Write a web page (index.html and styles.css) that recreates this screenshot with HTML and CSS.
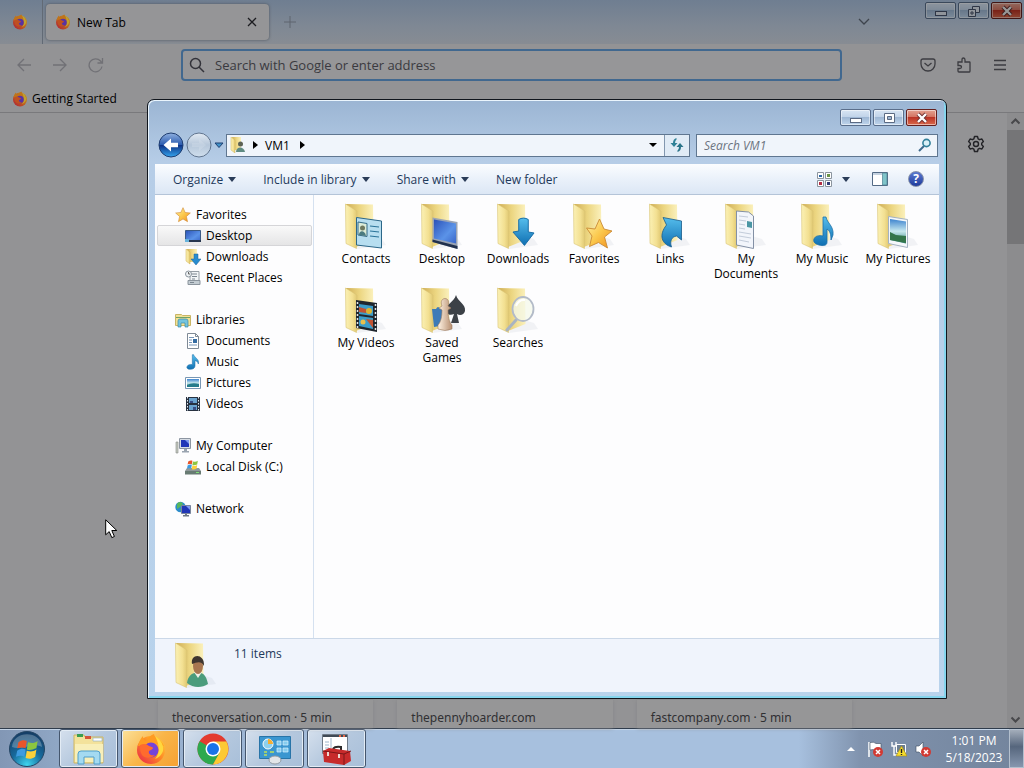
FILE: index.html
```html
<!DOCTYPE html>
<html lang="en">
<head>
    <meta charset="UTF-8">
    <meta name="viewport" content="width=device-width, initial-scale=1.0">
    <title>VM1</title>
    <link rel="stylesheet" href="styles.css">
</head>
<body>
    <!-- Shared icons -->
    <svg class="icon-defs" width="0" height="0" aria-hidden="true">
        <defs>
            <linearGradient id="gFlap" x1="0" y1="0" x2="1" y2="0"><stop offset="0" stop-color="#fbf1b5"/><stop offset=".6" stop-color="#f3e092"/><stop offset="1" stop-color="#e0c872"/></linearGradient>
            <linearGradient id="gBack" x1="0" y1="0" x2="1" y2="0"><stop offset="0" stop-color="#cfae57"/><stop offset=".5" stop-color="#ecd681"/><stop offset="1" stop-color="#fbf1bd"/></linearGradient>
            <linearGradient id="gBlue" x1="0" y1="0" x2="1" y2="1"><stop offset="0" stop-color="#2b52b8"/><stop offset=".6" stop-color="#5b93e8"/><stop offset="1" stop-color="#3a66c8"/></linearGradient>
            <linearGradient id="gSky" x1="0" y1="0" x2="0" y2="1"><stop offset="0" stop-color="#55bdec"/><stop offset="1" stop-color="#0f6fb2"/></linearGradient>
            <linearGradient id="gStar" x1="0" y1="0" x2="1" y2="1"><stop offset="0" stop-color="#fff3a8"/><stop offset=".5" stop-color="#fbc94e"/><stop offset="1" stop-color="#f08f1c"/></linearGradient>
            <linearGradient id="gFox" x1="1" y1="0" x2="0" y2="1"><stop offset="0" stop-color="#ffdc3e"/><stop offset=".45" stop-color="#ff8a25"/><stop offset="1" stop-color="#e8214d"/></linearGradient>
            <linearGradient id="gPhoto" x1="0" y1="0" x2="0" y2="1"><stop offset="0" stop-color="#3d83cf"/><stop offset=".5" stop-color="#c7e8ee"/><stop offset="1" stop-color="#2f7f78"/></linearGradient>
            <radialGradient id="gOrb" cx=".5" cy=".95" r=".9"><stop offset="0" stop-color="#3fd5ee"/><stop offset=".5" stop-color="#176a9c"/><stop offset="1" stop-color="#153f68"/></radialGradient>
            <linearGradient id="gNavBack" x1="0" y1="0" x2="0" y2="1"><stop offset="0" stop-color="#8fb0e0"/><stop offset=".48" stop-color="#2d5db0"/><stop offset=".5" stop-color="#0c2f83"/><stop offset="1" stop-color="#35a5ee"/></linearGradient>
            <linearGradient id="gNavFwd" x1="0" y1="0" x2="0" y2="1"><stop offset="0" stop-color="#e2eaf3"/><stop offset=".5" stop-color="#b6c7da"/><stop offset="1" stop-color="#cfdeed"/></linearGradient>
            <linearGradient id="gPawn" x1="0" y1="0" x2="1" y2="0"><stop offset="0" stop-color="#fff3e4"/><stop offset="1" stop-color="#b78f70"/></linearGradient>
        </defs>
        <symbol id="folder" viewBox="0 0 48 48">
            <path d="M15 46 44 42 40 36 20 30z" fill="#9aa3b5" opacity=".12"/>
            <path d="M4 1 31 1.500 31.500 37 14 44z" fill="url(#gBack)"/>
            <path d="M3.500 1 15 8 14.500 45.500 4 40.500z" fill="url(#gFlap)" stroke="#d9c272" stroke-width=".6"/>
        </symbol>
        <symbol id="firefox" viewBox="0 0 32 32">
            <circle cx="16" cy="17" r="14" fill="url(#gFox)"/>
            <path d="M3 13C4 8 6 5 8 3c0 3 1 4 3 5 2-4 5-6 8-7 0 4 8 6 10 12l-7-2-12 1z" fill="#ff9b22"/>
            <path d="M20 3c6 4 9 9 8 15-2 5-5 7-8 8 5-6 5-13 0-23z" fill="#ffd83d"/>
            <circle cx="16" cy="17" r="7.500" fill="#7543d8"/>
            <path d="M5 12c4-2 7-1 9 1 2 1 4 1 4 2s-2 2-4 3c-1 3 2 5 6 4-3 4-12 4-14-2-1-3-1-5-1-8z" fill="#ff6b2e"/>
        </symbol>
        <symbol id="star" viewBox="0 0 24 24">
            <path d="m12 1 3.200 7.200 7.800.8-5.900 5.200 1.700 7.800-6.800-4-6.800 4 1.700-7.800L1 9l7.800-.8z" fill="url(#gStar)" stroke="#d08a35" stroke-width=".9" stroke-linejoin="round"/>
        </symbol>
        <symbol id="note" viewBox="0 0 24 24">
            <path d="M13 1c1 5 9 6 7 14-1-4-3-5-5-5v8c0 3-3 5-7 5s-6-2-5-4c1-3 5-4 8-3V1z" fill="url(#gSky)" stroke="#1b6ea8" stroke-width=".8"/>
        </symbol>
        <symbol id="downarrow" viewBox="0 0 24 30">
            <path d="M7 2c3-2 7-2 10 0v13l6 1-10 13L1 15l6-1z" fill="url(#gSky)" stroke="#176da6" stroke-width="1"/>
        </symbol>
        <symbol id="flagwin" viewBox="0 0 20 20">
            <path d="M2 4c3-2 5-2 7-1L8 9c-2-1-4-1-7 0z" fill="#e8562a"/>
            <path d="M10 4c3 1 5 1 8-1l-1 6c-3 1-5 2-8 1z" fill="#8cc63f"/>
            <path d="M1 11c3-2 5-2 7-1l-1 6c-2-1-4-1-7 0z" fill="#3d9be0"/>
            <path d="M9 11c3 1 5 1 8-1l-1 6c-3 2-5 2-8 1z" fill="#fbd03a"/>
        </symbol>
        <symbol id="badx" viewBox="0 0 10 10">
            <circle cx="5" cy="5" r="5" fill="#d23a33"/>
            <path d="m3 3 4 4M7 3 3 7" stroke="#fff" stroke-width="1.500"/>
        </symbol>
    </svg>

    <div class="desktop">
        <!-- Browser behind -->
        <div class="browser">
            <div class="tab-strip">
                <div class="pinned-tab"><svg width="16" height="16"><use href="#firefox"/></svg></div>
                <div class="tab">
                    <svg width="16" height="16"><use href="#firefox"/></svg>
                    <span class="tab-title">New Tab</span>
                    <button class="plain-btn" aria-label="Close tab"><svg width="10" height="10" viewBox="0 0 10 10"><path d="m1 1 8 8M9 1 1 9" stroke="#1c1c20" stroke-width="1.300"/></svg></button>
                </div>
                <button class="plain-btn new-tab" aria-label="New tab"><svg width="12" height="12" viewBox="0 0 12 12"><path d="M6 0v12M0 6h12" stroke="#5f656e"/></svg></button>
                <button class="plain-btn list-tabs" aria-label="List tabs"><svg width="14" height="14" viewBox="0 0 14 14"><path d="m2 4 5 5 5-5" fill="none" stroke="#3e444d" stroke-width="1.300"/></svg></button>
                <div class="caption-buttons">
                    <button class="caption-btn" aria-label="Minimize browser"><svg width="12" height="12" viewBox="0 0 12 12"><rect x=".5" y="6.500" width="11" height="4" fill="#dde5ee" stroke="#46536b"/></svg></button>
                    <button class="caption-btn" aria-label="Restore browser"><svg width="12" height="12" viewBox="0 0 12 12"><path d="M4.500 1.500h7v6h-7z" fill="#dde5ee" stroke="#46536b"/><path d="M.5 4.500h7v7h-7z" fill="#dde5ee" stroke="#46536b"/><path d="M3 7h2v2H3z" fill="none" stroke="#46536b"/></svg></button>
                    <button class="caption-btn close" aria-label="Close browser"><svg width="12" height="12" viewBox="0 0 12 12"><path d="m2 2 8 8m0-8-8 8" stroke="#5a2727" stroke-width="4"/><path d="m2 2 8 8m0-8-8 8" stroke="#e8e8e8" stroke-width="2.400"/></svg></button>
                </div>
            </div>
            <div class="nav-bar">
                <button class="nav-btn dim" aria-label="Back"><svg width="16" height="16" viewBox="0 0 16 16"><path d="M15 8H2m6-6L2 8l6 6"/></svg></button>
                <button class="nav-btn dim" aria-label="Forward"><svg width="16" height="16" viewBox="0 0 16 16"><path d="M1 8h13M8 2l6 6-6 6"/></svg></button>
                <button class="nav-btn dim" aria-label="Reload"><svg width="16" height="16" viewBox="0 0 16 16"><path d="M14 9.500A6.500 6.500 0 1 1 12.500 4L14 6M14.500 1v5H9.500"/></svg></button>
                <div class="url-bar">
                    <svg width="16" height="16" viewBox="0 0 16 16"><circle cx="6.500" cy="6.500" r="5" fill="none" stroke="#33333a" stroke-width="1.500"/><path d="m10 10 5 5" stroke="#33333a" stroke-width="1.500"/></svg>
                    <input type="text" aria-label="Address" placeholder="Search with Google or enter address">
                </div>
                <button class="nav-btn" aria-label="Save to Pocket"><svg width="16" height="16" viewBox="0 0 16 16"><path d="M3 2h10q2 0 2 2v3a7 7 0 0 1-14 0V4q0-2 2-2zM4.500 6 8 9l3.500-3"/></svg></button>
                <button class="nav-btn" aria-label="Extensions"><svg width="16" height="16" viewBox="0 0 16 16"><path d="M2 5h4V3q0-2 1.500-2T9 3v2h4.500q.5 0 .5.500V14q0 1-.5 1H3q-1 0-1-1v-2.500h1.500q2 0 2-1.500t-2-1.500H2z"/></svg></button>
                <button class="nav-btn" aria-label="Menu"><svg width="16" height="16" viewBox="0 0 16 16"><path d="M2 3.500h12M2 8h12m-12 4.500h12"/></svg></button>
            </div>
            <div class="bookmarks">
                <a class="bookmark" href="#"><svg width="16" height="16"><use href="#firefox"/></svg>Getting Started</a>
            </div>
            <div class="page">
                <div class="page-body">
                    <button class="plain-btn settings" aria-label="Personalize"><svg width="18" height="18" viewBox="0 0 18 18"><path d="M7.500 1.500h3l.6 2.300 1.500.9 2.300-.7 1.500 2.600L14.700 8.200v1.600l1.700 1.600-1.500 2.600-2.300-.7-1.500.9-.6 2.300h-3l-.6-2.300-1.500-.9-2.300.7-1.500-2.600 1.700-1.600V8.200L1.600 6.600 3.100 4l2.300.7 1.500-.9z" fill="none" stroke="#232327" stroke-width="1.400" stroke-linejoin="round"/><circle cx="9" cy="9" r="2.500" fill="none" stroke="#232327" stroke-width="1.400"/></svg></button>
                    <div class="stories">
                        <a class="story" href="#">theconversation.com · 5 min</a>
                        <a class="story" href="#">thepennyhoarder.com</a>
                        <a class="story" href="#">fastcompany.com · 5 min</a>
                    </div>
                </div>
                <div class="scrollbar">
                    <svg width="11" height="8" viewBox="0 0 11 8"><path d="m1.500 6.500 4-4 4 4" fill="none" stroke="#48484b" stroke-width="2"/></svg>
                    <div class="thumb"></div>
                    <svg width="11" height="8" viewBox="0 0 11 8"><path d="m1.500 1.500 4 4 4-4" fill="none" stroke="#48484b" stroke-width="2"/></svg>
                </div>
            </div>
        </div>

        <!-- Explorer window -->
        <div class="explorer">
            <div class="caption-buttons">
                <button class="caption-btn" aria-label="Minimize"><svg width="12" height="12" viewBox="0 0 12 12"><rect x=".5" y="6.500" width="11" height="4" fill="#fff" stroke="#5b6a83"/></svg></button>
                <button class="caption-btn" aria-label="Maximize"><svg width="12" height="12" viewBox="0 0 12 12"><path d="M1.500 1.500h10v9h-10z" fill="#fff" stroke="#5b6a83"/><path d="M4.500 4.500h4v3h-4z" fill="#9fb6d2" stroke="#5b6a83"/></svg></button>
                <button class="caption-btn close" aria-label="Close"><svg width="12" height="12" viewBox="0 0 12 12"><path d="m2 2 8 8m0-8-8 8" stroke="#6d3030" stroke-width="4"/><path d="m2 2 8 8m0-8-8 8" stroke="#fff" stroke-width="2.400"/></svg></button>
            </div>
            <div class="address-row">
                <div class="history">
                    <button class="plain-btn" aria-label="Back"><svg width="26" height="26" viewBox="0 0 26 26"><circle cx="13" cy="13" r="12" fill="url(#gNavBack)" stroke="#1f3d70"/><path d="M5.500 13 13 6.500v4.200h7v4.600h-7v4.200z" fill="#fff"/></svg></button>
                    <button class="plain-btn" aria-label="Forward"><svg width="26" height="26" viewBox="0 0 26 26"><circle cx="13" cy="13" r="12" fill="url(#gNavFwd)" stroke="#61758f"/><path d="M20 13 13 7v4H6v4h7v4z" fill="#dbe5ef" opacity=".3"/></svg></button>
                    <button class="plain-btn" aria-label="Recent pages"><svg width="10" height="6" viewBox="0 0 10 6"><path d="M1 1h8L5 5.500z" fill="#4192c9" stroke="#1f3f70"/></svg></button>
                </div>
                <div class="address">
                    <svg width="16" height="16" viewBox="0 0 16 16"><path d="M2 0h9v13H5z" fill="url(#gBack)"/><path d="m1 0 4 3v13l-4-3z" fill="url(#gFlap)" stroke="#cfb45c" stroke-width=".5"/><circle cx="10.500" cy="7" r="2.500" fill="#5c6255"/><path d="M6 15c0-6 8-6 9 0z" fill="#5f8b82"/></svg>
                    <svg class="chevron" width="5" height="8" viewBox="0 0 5 8"><path d="M0 0v8l5-4z"/></svg>
                    <button class="plain-btn crumb">VM1</button>
                    <svg class="chevron" width="5" height="8" viewBox="0 0 5 8"><path d="M0 0v8l5-4z"/></svg>
                    <button class="plain-btn drop" aria-label="Previous locations"><svg width="8" height="4" viewBox="0 0 8 4"><path d="M0 0h8L4 4z"/></svg></button>
                    <button class="plain-btn refresh" aria-label="Refresh"><svg width="14" height="14" viewBox="0 0 14 14"><path d="M6.500 0v1.500Q5 2.500 5 5h2.500L4 9 .5 5H3q0-4 3.500-5z" fill="#2f8197"/><path d="M7.500 14v-1.500Q9 11.500 9 9H6.500L10 5l3.500 4H11q0 4-3.500 5z" fill="#2a7489"/></svg></button>
                </div>
                <div class="search">
                    <input type="text" aria-label="Search" placeholder="Search VM1">
                    <svg width="14" height="14" viewBox="0 0 14 14"><path d="m6 8-5 5" stroke="#3d6a8c" stroke-width="2"/><circle cx="8.500" cy="5" r="3.600" fill="#d9f0f7" stroke="#32809a" stroke-width="1.600"/></svg>
                </div>
            </div>

            <div class="frame">
                <div class="toolbar">
                    <button class="tool">Organize <i class="caret"></i></button>
                    <button class="tool">Include in library <i class="caret"></i></button>
                    <button class="tool">Share with <i class="caret"></i></button>
                    <button class="tool">New folder</button>
                    <div class="views">
                        <button class="plain-btn" aria-label="Change view"><svg width="15" height="15" viewBox="0 0 15 15"><g fill="#fff" stroke="#8b949e"><path d="M.5.500h6v6h-6zM8.500.500h6v6h-6zM.5 8.500h6v6h-6zM8.500 8.500h6v6h-6z"/></g><path d="M2 3h3v2H2z" fill="#2865a8"/><path d="M10 2h3v3h-3z" fill="#6a9348"/><path d="M2 10h3v3H2z" fill="#b42d43"/><path d="M10 10h3v3h-3z" fill="#313c77"/></svg></button>
                        <button class="plain-btn" aria-label="More options"><i class="caret"></i></button>
                        <button class="plain-btn" aria-label="Preview pane"><svg width="16" height="14" viewBox="0 0 16 14"><path d="M.5.500h15v13H.5z" fill="#fff" stroke="#536a85"/><path d="M1 1h9v2H1z" fill="#c5d2e0"/><path d="M10.500 1h4.500v12h-4.500z" fill="#7fc4c9" stroke="#4b7f91" stroke-width=".7"/></svg></button>
                        <button class="plain-btn help" aria-label="Help"><span>?</span></button>
                    </div>
                </div>

                <div class="panes">
                    <div class="tree">
                        <div class="group">
                            <a class="node root" href="#"><svg width="16" height="16"><use href="#star"/></svg>Favorites</a>
                            <a class="node selected" href="#"><svg width="16" height="16" viewBox="0 0 16 16"><path d="M.5 2.500h15v11H.5z" fill="url(#gBlue)" stroke="#3b5a85"/><path d="M1 12h15v2H1z" fill="#27364e"/><path d="M0 11h4v3H0z" fill="#67b3dc"/></svg>Desktop</a>
                            <a class="node" href="#"><svg width="16" height="16" viewBox="0 0 16 16"><path d="M2 0h10v13H5z" fill="url(#gBack)"/><path d="m1 0 4 3v12l-4-3z" fill="url(#gFlap)" stroke="#cfac4c" stroke-width=".5"/><path d="M9 5h4v5h3l-5 6-5-6h3z" fill="#278ccf" stroke="#1a6098" stroke-width=".5"/></svg>Downloads</a>
                            <a class="node" href="#"><svg width="16" height="16" viewBox="0 0 16 16"><path d="M5 1.500h9v12h-9z" fill="#f2f5f7" stroke="#969ea5"/><path d="M3 10.500h12v4H3z" fill="#c3ccd2" stroke="#8b949d"/><path d="M7 4h5M7 6.500h5M7 9h3M5 12.500h4" stroke="#7c8791"/><circle cx="3.500" cy="4" r="3" fill="#edf1f3" stroke="#8b949d"/><path d="M3.500 2v2H5" fill="none" stroke="#666"/></svg>Recent Places</a>
                        </div>
                        <div class="group">
                            <a class="node root" href="#"><svg width="16" height="16" viewBox="0 0 16 16"><path d="M.5 2.500h6l1 1h8v10H.5z" fill="#f2e194" stroke="#c9b566"/><path d="M1 5.500h14" stroke="#70a267"/><path d="M3 15V9q0-2 2-2h6q2 0 2 2v6h-3v-4H6v4z" fill="#73c4df" stroke="#398ba8" stroke-width=".7"/></svg>Libraries</a>
                            <a class="node" href="#"><svg width="16" height="16" viewBox="0 0 16 16"><path d="M2.500.500h8l3 3v12h-11z" fill="#fff" stroke="#7f8a96"/><path d="M10.500.500v3h3" fill="none" stroke="#7f8a96"/><path d="M4 4.500h5M4 7h3M4 9.500h3M4 12h8" stroke="#7796b8"/><path d="M8 6h4v4H8z" fill="#356ca2"/></svg>Documents</a>
                            <a class="node" href="#"><svg width="16" height="16"><use href="#note"/></svg>Music</a>
                            <a class="node" href="#"><svg width="16" height="16" viewBox="0 0 16 16"><path d="M.5 2.500h15v11H.5z" fill="#fff" stroke="#7897b4"/><path d="M2 4h12v8H2z" fill="url(#gPhoto)"/><path d="M2 10q5-3 12-1v3H2z" fill="#257c8c"/></svg>Pictures</a>
                            <a class="node" href="#"><svg width="16" height="16" viewBox="0 0 16 16"><path d="M1 1h14v14H1z" fill="#273140"/><path d="M4 2h8v5H4zM4 9h8v5H4z" fill="#6aa3cf"/><path d="M5 5h3v2H5zM8 11h3v3H8z" fill="#394f86"/><path d="M2.500 1v14M13.500 1v14" stroke="#e7edf2" stroke-dasharray="1.500 1.500"/></svg>Videos</a>
                        </div>
                        <div class="group">
                            <a class="node root" href="#"><svg width="16" height="16" viewBox="0 0 16 16"><path d="M1 4h2v11H1z" fill="#c5cbc0" stroke="#868b86" stroke-width=".6"/><path d="M4.500.500h11v10h-11z" fill="#d7dde5" stroke="#8d96a2"/><path d="M6 2h8v7H6z" fill="#2136b7"/><path d="M10 2h4v4z" fill="#7f9af0"/><path d="M9 11h3v2h2v1.500H7V13h2z" fill="#9aa4b0"/></svg>My Computer</a>
                            <a class="node" href="#"><svg width="16" height="16" viewBox="0 0 16 16"><path d="m0 12 2-3h12l2 3v3H0z" fill="#8f9899"/><path d="M0 12h16v3.500H0z" fill="#687b73"/><path d="M11 13.500h3" stroke="#7fe076"/><use href="#flagwin" x="2" y="0" width="12" height="12"/></svg>Local Disk (C:)</a>
                        </div>
                        <div class="group">
                            <a class="node root" href="#"><svg width="16" height="16" viewBox="0 0 16 16"><circle cx="5.500" cy="6" r="5.200" fill="#2c8ccb"/><path d="M2 3c2-3 5-2 6 0L5 6 2 8zM5 8h4l-2 3z" fill="#58b65c"/><path d="M6.500 4.500h9v8h-9z" fill="#2136b7" stroke="#7a869c"/><path d="M11 5h4v4z" fill="#7f9af0"/><path d="M10 13h2v1h2v1.500H8V14h2z" fill="#6e7885"/></svg>Network</a>
                        </div>
                    </div>

                    <div class="files">
                        <a class="file" href="#"><svg viewBox="0 0 48 48"><use href="#folder"/><path d="m14.500 14.500 25 3.500v27l-25-3z" fill="#b7def0" stroke="#2c6789"/><path d="m16 19 9 1.500v13L16 32z" fill="#dcecd8" stroke="#356b88"/><path d="M17 32c0-5 6-5 7 1z" fill="#4a7b80"/><circle cx="20.500" cy="25" r="2.500" fill="#6f7960"/><path d="m28 23 9 1m-9 4 9 1m-9 4 9 1" stroke="#2a7398" stroke-width="1.200"/></svg>Contacts</a>
                        <a class="file" href="#"><svg viewBox="0 0 48 48"><use href="#folder"/><path d="m14.500 14.500 25 4.500v27l-25-7z" fill="#9aa4b4"/><path d="m16 16.500 22 4v20l-22-5z" fill="url(#gBlue)"/><path d="m14.500 36.500 25 6.500v3l-25-7z" fill="#20304d"/></svg>Desktop</a>
                        <a class="file" href="#"><svg viewBox="0 0 48 48"><use href="#folder"/><use href="#downarrow" x="18" y="14" width="23" height="30"/></svg>Downloads</a>
                        <a class="file" href="#"><svg viewBox="0 0 48 48"><use href="#folder"/><path d="m29.500 16 4.500 10 8 2-7.500 6 3 11-9-5.500-9 4L22 33l-5.500-8 8.500 1z" fill="url(#gStar)" stroke="#c98a35" stroke-width=".9" stroke-linejoin="round"/></svg>Favorites</a>
                        <a class="file" href="#"><svg viewBox="0 0 48 48"><use href="#folder"/><path d="M17 14.500 35.500 18v19l-5-4c-5 1-7 5-5 11-10-3-13-12-5-22z" fill="url(#gSky)" stroke="#185c8a" stroke-width=".8"/></svg>Links</a>
                        <a class="file" href="#"><svg viewBox="0 0 48 48"><use href="#folder"/><path d="m14.500 8 12 1 5 4v32.500l-17-3.500z" fill="#f2f5fb" stroke="#8390a5"/><path d="m17 13 9 1m-9 3 7 1m-7 3 6 1m-6 3 6 1m-6 3 12 2m-12 2 12 2m-12 2 10 2" stroke="#c3ccda"/><path d="m25 18 5 1v6l-5-1z" fill="#4b96a4"/></svg>My Documents</a>
                        <a class="file" href="#"><svg viewBox="0 0 48 48"><use href="#folder"/><path d="M28 14c1 6 8 9 7 18l-2 5c0-6-1-9-4-11v13c0 4-4 4-8 3s-6-3-5-6 5-4 9-3V14z" fill="url(#gSky)" stroke="#1b6ea8" stroke-width=".8"/></svg>My Music</a>
                        <a class="file" href="#"><svg viewBox="0 0 48 48"><use href="#folder"/><path d="m14.500 13.500 19 3v28l-19-4z" fill="#f4f7fa" stroke="#a4b2c2"/><path d="m16 16 16 2.500v22L16 37z" fill="url(#gPhoto)"/><path d="m16 29 6 3 10 1v7l-16-3z" fill="#33754a"/></svg>My Pictures</a>
                        <a class="file" href="#"><svg viewBox="0 0 48 48"><use href="#folder"/><path d="m14 13 21 3v29l-21-4z" fill="#20262e"/><path d="m17 17 14 2v10l-14-2zM17 29l14 2v11l-14-3z" fill="#3b9cc9"/><path d="m17 20 7 2v4l-7-1zm7 12 7 1v8z" fill="#c15232"/><circle cx="27" cy="24" r="3" fill="#dbb333"/><circle cx="21" cy="35" r="2.500" fill="#e9c04c"/><path d="m15.500 15v26M33.500 17v26" stroke="#e1e6e8" stroke-width="1.500" stroke-dasharray="2 2"/></svg>My Videos</a>
                        <a class="file" href="#"><svg viewBox="0 0 48 48"><use href="#folder"/><path d="M14 22h4q2-4 4 0h5v16l-11 2z" fill="#3d7bb7"/><path d="M38 8c2 7 10 9 9 16-1 4-5 5-8 3l2 9h-8l3-9c-4 2-8 0-8-4 0-6 8-8 10-15z" fill="#3c4147"/><path d="M24 19c-4-10 10-10 6 0l3 2-3 2c0 6 1 12 4 15v4q-7 3-14 0v-4c3-3 4-9 4-15l-3-2z" fill="url(#gPawn)" stroke="#9b7a60" stroke-width=".6"/></svg>Saved Games</a>
                        <a class="file" href="#"><svg viewBox="0 0 48 48"><use href="#folder"/><path d="M22 33 13 43" stroke="#a9b4c1" stroke-width="3" stroke-linecap="round"/><ellipse cx="29" cy="22" rx="10.500" ry="12" fill="#f4f8ea" fill-opacity=".75" stroke="#b3bbc8" stroke-width="1.800"/><path d="M22 19q3-7 9-6" fill="none" stroke="#fff" stroke-width="2"/></svg>Searches</a>
                    </div>
                </div>

                <div class="details">
                    <svg width="48" height="48" viewBox="0 0 48 48"><use href="#folder"/><path d="M15 41c1-8 6-11 13-10 5 0 7 6 8 11-6 4-15 4-21-1z" fill="#4b9c7c"/><path d="m22 30 4 6 4-6z" fill="#f1efe8"/><ellipse cx="26" cy="24" rx="5" ry="8" fill="#a87650"/><path d="M20 22c-2-11 13-11 12 2-3-6-8-3-12-2z" fill="#3e352f"/></svg>
                    <span>11 items</span>
                </div>
            </div>
        </div>

        <svg class="pointer" width="13" height="20" viewBox="0 0 13 20"><path d="M.7.800v15l3.500-3.200 2.600 6 2.600-1.100-2.600-6h5z" fill="#fff" stroke="#000"/></svg>
    </div>

    <!-- Taskbar -->
    <div class="taskbar">
        <button class="plain-btn start" aria-label="Start"><svg width="38" height="38" viewBox="0 0 38 38"><circle cx="19" cy="19" r="17.500" fill="url(#gOrb)" stroke="#244564"/><path d="M4 17C5 0 33 0 34 17 25 12 13 21 4 17z" fill="#fff" opacity=".25"/><use href="#flagwin" x="8" y="7" width="24" height="25"/></svg></button>
        <div class="tasks">
            <button class="task" aria-label="Windows Explorer"><svg width="36" height="34" viewBox="0 0 36 34"><path d="M3 3h10l1 2h18v26H3z" fill="#f3e29b" stroke="#cdb565"/><path d="M6 2h6v3H6z" fill="#3a9d51"/><path d="M14 4h6v3h-6z" fill="#d4533a"/><path d="M22 6h9v3h-9z" fill="#fff" stroke="#8cabc4" stroke-width=".6"/><path d="M4 12h28v18H4z" fill="#f8efb9"/><path d="M7 32V22q0-3 3-3h16q3 0 3 3v10h-6v-7H13v7z" fill="#a4daf1" stroke="#4f9ecb"/></svg></button>
            <button class="task orange" aria-label="Firefox"><svg width="32" height="32"><use href="#firefox"/></svg></button>
            <button class="task" aria-label="Chrome"><svg width="32" height="32" viewBox="0 0 32 32"><circle cx="16" cy="16" r="15.500" fill="#e33b2e"/><path d="M16 16 2.600 8.200A15.500 15.500 0 0 0 16 31.500l7-12z" fill="#2da94f"/><path d="M16 31.500A15.500 15.500 0 0 0 29.400 8.500H16l6.500 11.300z" fill="#fcc934"/><circle cx="16" cy="16" r="7.500" fill="#fff"/><circle cx="16" cy="16" r="6" fill="#1a73e8"/></svg></button>
            <button class="task" aria-label="Control Panel"><svg width="34" height="32" viewBox="0 0 34 32"><path d="M1.500 3.500h31v22h-31z" fill="#3b96d0" stroke="#2874a8"/><circle cx="10" cy="11" r="5" fill="#8dd0ee" stroke="#fff"/><path d="M10 11V6a5 5 0 0 1 5 5z" fill="#f5ae33"/><path d="M19 8h4v4h-4zm6 0h5v4h-5zm-6 7h4v4h-4zm6 0h5v4h-5z" fill="#86ccef" stroke="#d8f0ff" stroke-width=".7"/><path d="M6 19h3m3 0h4m-10 3h3" stroke="#bde05b" stroke-width="1.500"/><ellipse cx="17" cy="27" rx="6" ry="4" fill="#e2e5e8" stroke="#929aa2"/></svg></button>
            <button class="task" aria-label="Tools"><svg width="34" height="34" viewBox="0 0 34 34"><path d="M2.500 2.500h25v19h-25z" fill="#fff" stroke="#6e7986"/><path d="M3 3h24v2H3z" fill="#404a55"/><path d="M19 4h2m2 0h2" stroke="#e66b4a" stroke-width="2"/><path d="M5 10h4m-4 3h4m-4 3h4M11 6v10" stroke="#9eb5cb"/><path d="M13 18q0-4 8-3v4" fill="none" stroke="#292929" stroke-width="2"/><path d="m3 19 6-3 21 3 1 10-7 4-20-3z" fill="#c72a2b"/><path d="m3 19 21 3 7-3M24 22v11" fill="none" stroke="#7b1618"/><path d="m8 20v4m11-2v4" stroke="#eed6d0" stroke-width="2"/></svg></button>
        </div>
        <div class="tray">
            <button class="plain-btn" aria-label="Show hidden icons"><svg width="8" height="5" viewBox="0 0 8 5"><path d="m0 5 4-4 4 4z" fill="#fff"/></svg></button>
            <svg width="16" height="16" viewBox="0 0 16 16"><path d="M2 1v15" stroke="#fff" stroke-width="1.500"/><path d="M3 1.500q4-1 6 1h5v7H9Q6 8 3 9z" fill="#fff" stroke="#3b4b60" stroke-width=".6"/><use href="#badx" x="6" y="6" width="10" height="10"/></svg>
            <svg width="16" height="16" viewBox="0 0 16 16"><path d="M5.500 3.500h9v8h-9z" fill="#6e7f91" stroke="#fff"/><path d="M1 1v4h4V1M3 5v9h3" fill="none" stroke="#fff" stroke-width="1.400"/><path d="m10.500 5 5.500 10H5z" fill="#f5dc2c" stroke="#a88c13" stroke-width=".6"/><path d="M10.500 8v4m0 1v1" stroke="#222" stroke-width="1.400"/></svg>
            <svg width="16" height="16" viewBox="0 0 16 16"><path d="M1 5h3l4-4v14l-4-4H1z" fill="#fff" stroke="#3b4b60" stroke-width=".6"/><use href="#badx" x="6" y="6" width="10" height="10"/></svg>
            <div class="clock"><span>1:01 PM</span><span>5/18/2023</span></div>
        </div>
        <button class="show-desktop" aria-label="Show desktop"></button>
    </div>
</body>
</html>
```
FILE: styles.css
```css
* {
    box-sizing: border-box;
}
body {
    margin: 0;
    height: 100vh;
    display: flex;
    flex-direction: column;
    overflow: hidden;
    font-family: "Open Sans", "Noto Sans", sans-serif;
    font-size: 12px;
    color: #000;
}
button, input {
    font: inherit;
    color: inherit;
}
a {
    color: inherit;
    text-decoration: none;
}
svg {
    display: block;
    flex-shrink: 0;
}
.plain-btn {
    display: flex;
    align-items: center;
    justify-content: center;
    padding: 0;
    border: 0;
    background: none;
}
.desktop {
    position: relative;
    flex: 1;
    min-height: 0;
    display: flex;
}

/* Browser */
.browser {
    flex: 1;
    display: flex;
    flex-direction: column;
    background: #939395;
}
.tab-strip {
    height: 44px;
    display: flex;
    align-items: center;
    background: linear-gradient(#6f7e91, #7f8894 60%, #878c93);
}
.pinned-tab {
    width: 43px;
    height: 44px;
    display: flex;
    align-items: center;
    padding-left: 12px;
    border-right: 1px solid #626a75;
}
.pinned-tab svg, .tab > svg, .bookmark svg {
    filter: brightness(0.75);
}
.tab {
    width: 223px;
    height: 36px;
    margin-left: 3px;
    padding: 0 12px 0 9px;
    display: flex;
    align-items: center;
    gap: 6px;
    border-radius: 4px;
    background: #959597;
    box-shadow: 0 0 3px #4f555e;
}
.tab-title {
    flex: 1;
}
.new-tab {
    width: 42px;
}
.list-tabs {
    margin-left: auto;
    margin-right: 54px;
}
.caption-buttons {
    display: flex;
    gap: 2px;
}
.tab-strip .caption-buttons {
    align-self: flex-start;
    padding: 2px 2px 0 0;
    filter: brightness(0.65);
}
.caption-btn {
    width: 31px;
    height: 17px;
    padding: 0;
    display: flex;
    align-items: center;
    justify-content: center;
    border: 1px solid #5a6e8b;
    border-radius: 2px;
    background: linear-gradient(#d8e5f3, #bfd2e8 50%, #9fb8d5 50%, #bfd5ec);
    box-shadow: inset 0 0 0 1px rgba(255, 255, 255, 0.5);
}
.caption-btn.close {
    border-color: #64201f;
    background: linear-gradient(#e3a291, #d3705e 50%, #bb3425 50%, #d9694c);
}
.nav-bar {
    height: 41px;
    padding: 0 6px;
    display: flex;
    align-items: center;
}
.nav-btn {
    width: 36px;
    height: 32px;
    padding: 0;
    display: flex;
    align-items: center;
    justify-content: center;
    border: 0;
    background: none;
}
.nav-btn path {
    fill: none;
    stroke: #3c3c41;
    stroke-width: 1.3;
}
.nav-btn.dim path {
    stroke: #717176;
}
.url-bar {
    flex: 1;
    height: 32px;
    margin: 0 68px 0 67px;
    padding: 0 8px 0 6px;
    display: flex;
    align-items: center;
    gap: 10px;
    border: 2px solid #41688f;
    border-radius: 4px;
    background: #969698;
}
.url-bar input {
    flex: 1;
    padding: 0;
    border: 0;
    outline: 0;
    background: none;
    font-size: 13px;
}
.url-bar input::placeholder {
    color: #3a3a40;
    opacity: 1;
}
.bookmarks {
    height: 28px;
    padding: 0 12px;
    display: flex;
    align-items: center;
    border-bottom: 1px solid #79797c;
}
.bookmark {
    display: flex;
    align-items: center;
    gap: 4px;
}
.page {
    flex: 1;
    display: flex;
}
.page-body {
    flex: 1;
    display: flex;
    flex-direction: column;
    justify-content: space-between;
}
.settings {
    align-self: flex-end;
    margin: 22px 22px 0 0;
}
.stories {
    padding: 0 155px 0 158px;
    display: grid;
    grid-template-columns: repeat(3, 1fr);
    gap: 24px;
}
.story {
    padding: 8px 14px 0;
    line-height: 20px;
    background: #969697;
    box-shadow: 0 0 4px #86868a;
    color: #303033;
    font-family: "Noto Sans", "Open Sans", sans-serif;
    white-space: nowrap;
}
.scrollbar {
    width: 17px;
    padding: 4px 0;
    display: flex;
    flex-direction: column;
    align-items: center;
    background: #8c8c8e;
}
.thumb {
    width: 17px;
    height: 114px;
    margin: 5px 0 auto;
    background: #757577;
}

/* Explorer window */
.explorer {
    position: absolute;
    left: 147px;
    top: 99px;
    width: 800px;
    height: 600px;
    padding: 9px 7px 6px;
    display: flex;
    flex-direction: column;
    border: 1px solid #10151c;
    border-radius: 7px 7px 0 0;
    background: linear-gradient(#9bb5d3, #b6cde7 62px, #b9d3ec);
    box-shadow: inset 1px 1px 0 #eaf5fd, inset -2px -2px 0 #86d5ed;
}
.explorer .caption-buttons {
    align-self: flex-end;
    padding-right: 2px;
}
.address-row {
    height: 38px;
    display: flex;
    align-items: center;
}
.history {
    display: flex;
    align-items: center;
    gap: 2px;
    margin: 0 2px 0 3px;
}
.address, .search {
    height: 23px;
    display: flex;
    align-items: center;
    border: 1px solid #5f7690;
    background: #f0f5fb;
}
.address {
    flex: 1;
    padding-left: 3px;
    gap: 7px;
}
.crumb {
    margin-right: 3px;
}
.drop {
    margin-left: auto;
}
.refresh {
    width: 25px;
    height: 21px;
    border-left: 1px solid #8297af;
    background: #e0ebf6;
}
.search {
    width: 242px;
    margin: 0 1px 0 6px;
    padding: 0 5px 0 7px;
}
.search input {
    flex: 1;
    min-width: 0;
    padding: 0;
    border: 0;
    outline: 0;
    background: none;
}
.search input::placeholder {
    color: #6c7480;
    font-style: italic;
    opacity: 1;
}
.frame {
    flex: 1;
    min-height: 0;
    display: flex;
    flex-direction: column;
    background: #fdfdfe;
}
.toolbar {
    height: 31px;
    padding: 0 15px 0 18px;
    display: flex;
    align-items: center;
    gap: 27px;
    border-bottom: 1px solid #b4c4d8;
    background: linear-gradient(#fbfdff, #eaf1fa 50%, #dce7f5);
    color: #1e395b;
}
.tool {
    padding: 0;
    display: flex;
    align-items: center;
    gap: 5px;
    border: 0;
    background: none;
}
.caret {
    border: 4px solid transparent;
    border-top: 5px solid #2a3c58;
    border-bottom: 0;
}
.views {
    margin-left: auto;
    display: flex;
    align-items: center;
    gap: 20px;
}
.views .plain-btn:nth-child(2) {
    margin: 0 2px 0 -10px;
}
.help {
    width: 16px;
    height: 16px;
    border: 1px solid #8792ab;
    border-radius: 50%;
    background: linear-gradient(#5b7ad0, #1e3b9c);
    color: #fff;
    font-weight: bold;
    line-height: 14px;
}
.panes {
    flex: 1;
    min-height: 0;
    display: flex;
}
.tree {
    width: 159px;
    padding: 9px 1px 0 2px;
    border-right: 1px solid #d5e1f0;
}
.group {
    margin-bottom: 21px;
}
.node {
    height: 21px;
    padding-left: 27px;
    display: flex;
    align-items: center;
    gap: 5px;
    border: 1px solid transparent;
    border-radius: 2px;
    white-space: nowrap;
}
.node.root {
    padding-left: 17px;
}
.node.selected {
    border-color: #d5d5d8;
    background: linear-gradient(#f9f9f9, #e5e5e6);
}
.files {
    flex: 1;
    padding: 8px 0 0 14px;
    display: grid;
    grid-template-columns: repeat(auto-fill, 76px);
    grid-auto-rows: 84px;
    align-content: start;
}
.file {
    padding: 0 4px;
    display: flex;
    flex-direction: column;
    align-items: center;
    line-height: 15px;
    text-align: center;
}
.file svg {
    width: 48px;
    height: 48px;
}
.details {
    height: 54px;
    padding: 3px 17px;
    display: flex;
    gap: 14px;
    border-top: 1px solid #cbd8e8;
    background: #f0f4fc;
    color: #1e395b;
    line-height: 23px;
}
.pointer {
    position: absolute;
    left: 105px;
    top: 519px;
}

/* Taskbar */
.taskbar {
    height: 40px;
    display: flex;
    border-top: 1px solid #2f3c4c;
    background: linear-gradient(90deg, #8297b5, #8fa6c4 56px, #a7c0de 370px, #a7c0de 78%, #8093ae 84%, #73849c);
    box-shadow: inset 0 1px 0 #c4d4e6;
}
.start {
    width: 54px;
}
.tasks {
    display: flex;
    gap: 3px;
    margin-left: 5px;
}
.task {
    width: 59px;
    padding: 0;
    display: flex;
    align-items: center;
    justify-content: center;
    border: 1px solid #45566d;
    border-radius: 3px;
    background: linear-gradient(135deg, #d5e0ed, #b5c8de 50%, #a8bfd9);
    box-shadow: inset 0 0 0 1px #e3ecf5;
}
.task.orange {
    background: linear-gradient(135deg, #fbe29b, #f9b548 50%, #f5a133);
}
.tray {
    margin-left: auto;
    display: flex;
    align-items: center;
    gap: 8px;
    color: #fff;
}
.tray .plain-btn {
    margin-right: 4px;
}
.clock {
    width: 70px;
    display: flex;
    flex-direction: column;
    text-align: center;
    line-height: 17px;
}
.show-desktop {
    width: 15px;
    padding: 0;
    border: 1px solid #b3bfcd;
    background: linear-gradient(#a3adba, #56667d 45%, #8696ae);
}
```
